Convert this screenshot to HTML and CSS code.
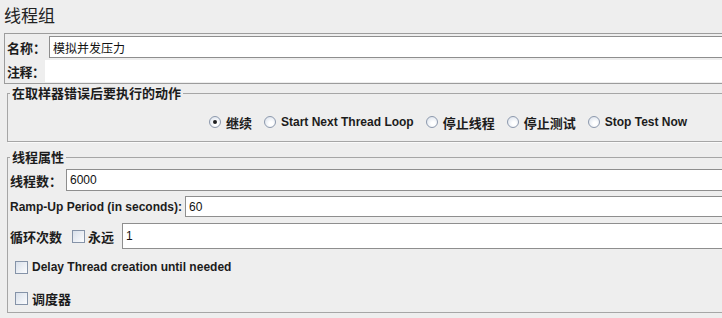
FILE: index.html
```html
<!DOCTYPE html>
<html lang="zh-CN">
<head>
    <meta charset="UTF-8">
    <title>线程组</title>
    <link rel="stylesheet" href="styles.css">
</head>
<body>
    <div class="title">线程组</div>

    <!-- Name and comment -->
    <div class="name-panel">
        <div class="row name-row">
            <label class="zh label-name">名称：</label>
            <input class="field" type="text" value="模拟并发压力">
        </div>
        <div class="row comment-row">
            <label class="zh label-comment">注释：</label>
            <textarea class="comment"></textarea>
        </div>
    </div>

    <!-- Action after sampler error -->
    <fieldset class="group action-group">
        <legend class="zh">在取样器错误后要执行的动作</legend>
        <div class="radios">
            <label class="option"><span class="radio checked"></span><span class="zh">继续</span></label>
            <label class="option"><span class="radio"></span><span>Start Next Thread Loop</span></label>
            <label class="option"><span class="radio"></span><span class="zh">停止线程</span></label>
            <label class="option"><span class="radio"></span><span class="zh">停止测试</span></label>
            <label class="option"><span class="radio"></span><span>Stop Test Now</span></label>
        </div>
    </fieldset>

    <!-- Thread properties -->
    <fieldset class="group thread-group">
        <legend class="zh">线程属性</legend>
        <div class="row threads-row">
            <label class="zh label-threads">线程数：</label>
            <input class="field" type="text" value="6000">
        </div>
        <div class="row ramp-row">
            <label class="label-ramp">Ramp-Up Period (in seconds):</label>
            <input class="field" type="text" value="60">
        </div>
        <div class="row loop-row">
            <label class="zh label-loop">循环次数</label>
            <span class="check"></span>
            <label class="zh label-forever">永远</label>
            <input class="field" type="text" value="1">
        </div>
        <div class="row check-row delay-row">
            <span class="check"></span>
            <label>Delay Thread creation until needed</label>
        </div>
        <div class="row check-row scheduler-row">
            <span class="check"></span>
            <label class="zh">调度器</label>
        </div>
    </fieldset>
</body>
</html>
```

FILE: styles.css
```css
html, body {
    overflow: hidden;
}
body {
    margin: 0;
    padding: 0;
    background-color: #eeeeee;
    color: #1c1c1c;
    font-family: "Liberation Sans", "Noto Sans CJK SC", sans-serif;
    font-size: 12px;
    font-weight: bold;
}
.zh {
    font-size: 13px;
}
.title {
    height: 33px;
    line-height: 33px;
    padding-left: 4px;
    font-size: 17px;
    font-weight: normal;
    color: #222;
}
.row {
    display: flex;
    align-items: center;
}
.row label {
    flex-shrink: 0;
    white-space: nowrap;
}
/* fields run on past the right edge of the window */
.field {
    flex: 1;
    min-width: 0;
    box-sizing: border-box;
    height: 100%;
    margin: 0;
    padding: 0 3px;
    border: 1px solid #8e8e8e;
    border-right: none;
    background: #fff;
    color: #111;
    font-family: "Liberation Sans", "Noto Sans CJK SC", sans-serif;
    font-size: 12px;
    font-weight: normal;
    outline: none;
}

/* Name / comment panel */
.name-panel {
    margin-left: 4px;
    padding: 2px 0 1px 2px;
    border: 1px solid #9c9c9c;
    border-right: none;
}
.name-row {
    height: 22px;
}
.comment-row {
    height: 22px;
    margin-top: 2px;
}
.label-name {
    width: 42px;
}
.label-comment {
    width: 38px;
    letter-spacing: -0.5px;
}
.comment {
    flex: 1;
    min-width: 0;
    height: 100%;
    box-sizing: border-box;
    margin: 0;
    border: none;
    background: #fff;
    resize: none;
    outline: none;
}

/* Titled groups */
.group {
    min-width: 0;
    margin: 0 0 0 7px;
    padding: 0 0 0 2px;
    border: 1px solid #a6a6a6;
    border-right: none;
    box-shadow: 1px 1px 0 #fafafa;
}
.group legend {
    padding: 0 2px;
    line-height: 15px;
}
.action-group {
    margin-top: 2px;
    padding-bottom: 9px;
}
.radios {
    display: flex;
    align-items: center;
    gap: 12px;
    height: 20px;
    margin: 11px 0 0 199px;
}
.option {
    display: flex;
    align-items: center;
    gap: 5px;
}
.radio {
    width: 10px;
    height: 10px;
    border: 1px solid #8d99ad;
    border-radius: 50%;
    background: radial-gradient(circle at 60% 65%, #ffffff 20%, #dfe5ee 80%);
    position: relative;
}
.radio.checked::after {
    content: "";
    position: absolute;
    left: 3px;
    top: 3px;
    width: 4px;
    height: 4px;
    border-radius: 50%;
    background: #202020;
}

/* Thread properties */
.thread-group {
    margin-top: 8px;
    padding-bottom: 4px;
}
.threads-row {
    height: 22px;
    margin-top: 4px;
}
.label-threads {
    width: 56px;
}
.ramp-row {
    height: 21px;
    margin-top: 5px;
}
.label-ramp {
    width: 175px;
}
.loop-row {
    height: 26px;
    margin-top: 6px;
}
.label-loop {
    width: 62px;
}
.label-forever {
    width: 34px;
    margin-left: 3px;
}
.check {
    flex-shrink: 0;
    width: 11px;
    height: 11px;
    border: 1px solid #8593a8;
    background: linear-gradient(135deg, #d9e0ea, #fbfcfe);
}
.check-row {
    height: 20px;
    gap: 4px;
    padding-left: 5px;
}
.delay-row {
    margin-top: 8px;
}
.scheduler-row {
    margin-top: 11px;
}
```
